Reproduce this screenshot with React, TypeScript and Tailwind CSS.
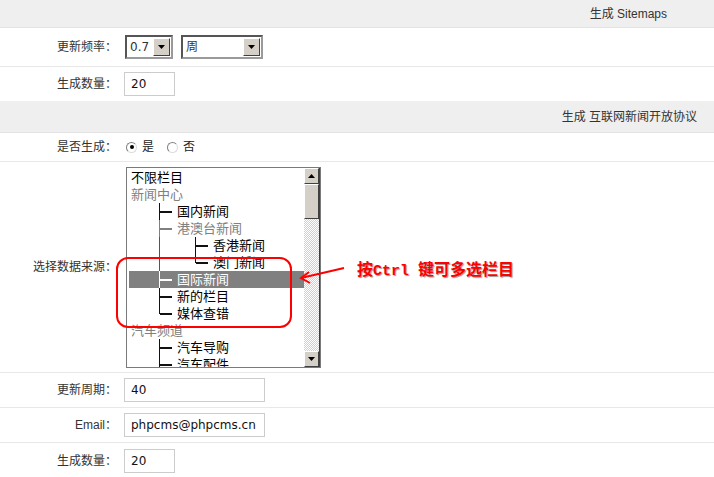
import React from 'react';

const cjk = "font-['Liberation_Sans','Noto_Sans_CJK_SC',sans-serif]";
const val = "font-['DejaVu_Sans','Noto_Sans_CJK_SC',sans-serif]";

function Header({ title, pr }: { title: string; pr: string }) {
  return (
    <div className={`flex h-[32px] items-center justify-end border-b border-[#e3e3e3] bg-[#efefef] text-[12px] text-[#333] ${pr}`}>
      {title}
    </div>
  );
}

function Row({ label, h, children, last }: { label: string; h: string; children: React.ReactNode; last?: boolean }) {
  return (
    <div className={`flex items-center ${h} ${last ? '' : 'border-b border-[#e8e8e8]'}`}>
      <div className="w-[117px] text-right text-[12px] text-[#333]">{label}</div>
      <div className="flex items-center pl-[7px]">{children}</div>
    </div>
  );
}

function Input({ value, w }: { value: string; w: string }) {
  return (
    <div className={`flex h-[24px] items-center border border-[#cccccc] bg-white pl-[6px] text-[12px] text-[#111] ${val} ${w}`}>
      {value}
    </div>
  );
}

function Arrow({ up }: { up?: boolean }) {
  return (
    <svg width="7" height="4" viewBox="0 0 7 4">
      {up ? <path d="M3.5 0 L7 4 L0 4 Z" fill="#000" /> : <path d="M0 0 L7 0 L3.5 4 Z" fill="#000" />}
    </svg>
  );
}

function Select({ value, w }: { value: string; w: string }) {
  return (
    <div className={`flex h-[24px] border-2 border-t-[#555] border-l-[#555] border-r-[#9a9a9a] border-b-[#9a9a9a] bg-white ${w}`}>
      <div className={`flex flex-1 items-center pl-[3px] text-[12px] text-[#333] ${val}`}>{value}</div>
      <div className="m-[1px] flex w-[17px] items-center justify-center border border-t-white border-l-white border-r-[#404040] border-b-[#404040] bg-[#d4d0c8]">
        <Arrow />
      </div>
    </div>
  );
}

function Radio({ on }: { on?: boolean }) {
  return (
    <span className="flex h-[11px] w-[11px] items-center justify-center rounded-full border border-t-[#808080] border-l-[#808080] border-r-[#dcdcdc] border-b-[#dcdcdc] bg-white">
      {on && <span className="h-[4px] w-[4px] rounded-full bg-black" />}
    </span>
  );
}

type Item = { text: string; lvl: 0 | 1 | 2; gray?: boolean; last?: boolean; sel?: boolean };

const items: Item[] = [
  { text: '不限栏目', lvl: 0 },
  { text: '新闻中心', lvl: 0, gray: true },
  { text: '国内新闻', lvl: 1 },
  { text: '港澳台新闻', lvl: 1, gray: true },
  { text: '香港新闻', lvl: 2 },
  { text: '澳门新闻', lvl: 2, last: true },
  { text: '国际新闻', lvl: 1, sel: true },
  { text: '新的栏目', lvl: 1 },
  { text: '媒体查错', lvl: 1, last: true },
  { text: '汽车频道', lvl: 0, gray: true },
  { text: '汽车导购', lvl: 1 },
  { text: '汽车配件', lvl: 1 },
];

function Branch({ last, color }: { last?: boolean; color: string }) {
  return (
    <span className="relative h-[17px] w-[18px] shrink-0">
      <span className={`absolute left-0 top-0 w-[1px] ${last ? 'h-[9px]' : 'h-[17px]'} ${color}`} />
      <span className={`absolute left-[1px] top-[8px] h-[2px] w-[12px] ${color}`} />
    </span>
  );
}

function TreeRow({ it }: { it: Item }) {
  const txt = it.sel ? 'text-white' : it.gray ? 'text-[#808080]' : 'text-black';
  const line = it.sel ? 'bg-white' : it.gray ? 'bg-[#808080]' : 'bg-[#111]';
  return (
    <div className={`flex h-[17px] items-center pl-[2px] ${it.sel ? 'bg-[#808080]' : ''}`}>
      {it.lvl === 0 && <span className={txt}>{it.text}</span>}
      {it.lvl === 1 && (
        <>
          <span className="w-[28px] shrink-0" />
          <Branch last={it.last} color={line} />
          <span className={txt}>{it.text}</span>
        </>
      )}
      {it.lvl === 2 && (
        <>
          <span className="w-[28px] shrink-0" />
          <span className="relative h-[17px] w-[36px] shrink-0">
            <span className="absolute left-0 top-0 h-[17px] w-[1px] bg-[#6a3aa0]" />
          </span>
          <Branch last={it.last} color={line} />
          <span className={txt}>{it.text}</span>
        </>
      )}
    </div>
  );
}

function ListBox() {
  return (
    <div className="ml-[2px] flex h-[201px] w-[195px] border border-[#7a7a7a] bg-white">
      <div className={`flex-1 overflow-hidden pl-[2px] pt-[1px] text-[13px] leading-[17px] ${cjk}`}>
        {items.map((it) => (
          <TreeRow key={it.text} it={it} />
        ))}
      </div>
      <div className="flex w-[16px] flex-col border-r border-[#404040] bg-[repeating-conic-gradient(#d4d0c8_0_25%,#ffffff_0_50%)] bg-[length:2px_2px]">
        <div className="flex h-[16px] items-center justify-center border border-t-white border-l-white border-r-[#404040] border-b-[#404040] bg-[#d4d0c8]">
          <Arrow up />
        </div>
        <div className="h-[35px] border border-t-white border-l-white border-r-[#404040] border-b-[#404040] bg-[#d4d0c8]" />
        <div className="flex-1" />
        <div className="flex h-[16px] items-center justify-center border border-t-white border-l-white border-r-[#404040] border-b-[#404040] bg-[#d4d0c8]">
          <Arrow />
        </div>
      </div>
    </div>
  );
}

export default function App() {
  return (
    <div className={`relative h-[477px] w-[714px] overflow-hidden bg-white ${cjk}`}>
      <div className="flex h-[28px] items-center justify-end border-b border-[#e3e3e3] bg-[#efefef] pr-[47px] text-[12px] text-[#333]">
        生成 Sitemaps
      </div>
      <Row label="更新频率：" h="h-[39px]">
        <div className="flex gap-[8px] pl-[1px]">
          <Select value="0.7" w="w-[48px]" />
          <Select value="周" w="w-[82px]" />
        </div>
      </Row>
      <Row label="生成数量：" h="h-[34px]" last>
        <Input value="20" w="w-[51px]" />
      </Row>
      <Header title="生成 互联网新闻开放协议" pr="pr-[17px]" />
      <Row label="是否生成：" h="h-[29px]">
        <div className="flex items-center pl-[2px] text-[12px] text-[#222]">
          <Radio on />
          <span className="ml-[5px]">是</span>
          <span className="ml-[13px]">
            <Radio />
          </span>
          <span className="ml-[5px]">否</span>
        </div>
      </Row>
      <Row label="选择数据来源：" h="h-[211px]">
        <ListBox />
      </Row>
      <Row label="更新周期：" h="h-[35px]">
        <Input value="40" w="w-[141px]" />
      </Row>
      <Row label="Email：" h="h-[35px]">
        <Input value="phpcms@phpcms.cn" w="w-[141px]" />
      </Row>
      <Row label="生成数量：" h="h-[35px]" last>
        <Input value="20" w="w-[51px]" />
      </Row>

      {/* red hand-drawn annotation */}
      <svg className="absolute left-0 top-0" width="714" height="477" viewBox="0 0 714 477">
        <rect x="117" y="258" width="174" height="69" rx="11" fill="none" stroke="#ff0000" strokeWidth="2" />
        <path d="M344 268 L301 278" stroke="#ff0000" strokeWidth="2" fill="none" />
        <path d="M309 272 L301 278 L310 283" stroke="#ff0000" strokeWidth="2" fill="none" />
      </svg>
      <div className="absolute left-[357px] top-[259px] flex items-baseline text-[16px] font-bold leading-[18px] text-[#ff0000] [text-shadow:1px_1px_1px_#999]">
        <span className="font-['Noto_Sans_CJK_SC',sans-serif]">按</span>
        <span className="font-['Liberation_Mono',monospace] text-[15px]">Ctrl&nbsp;</span>
        <span className="font-['Noto_Sans_CJK_SC',sans-serif]">键可多选栏目</span>
      </div>
    </div>
  );
}
